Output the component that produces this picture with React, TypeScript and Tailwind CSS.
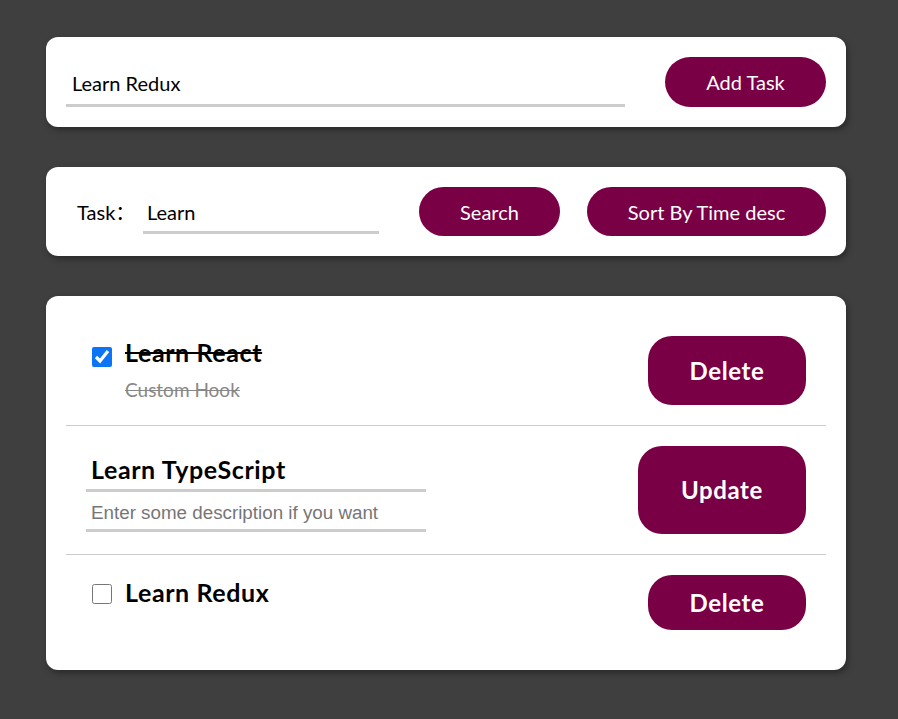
import React from 'react';

const ui = { fontFamily: 'Lato, "Noto Sans CJK SC", sans-serif' };

export default function App() {
  return (
    <div className="min-h-[719px] w-full bg-[#3f3f3f] pt-[37px]" style={ui}>
      <div className="ml-[46px] w-[800px] flex flex-col gap-10">
        {/* add task */}
        <div className="flex items-center justify-between rounded-xl bg-white px-5 py-5 shadow-[2px_3px_6px_rgba(0,0,0,0.35)]">
          <input
            defaultValue="Learn Redux"
            className="w-[559px] h-[49px] border-b-[3px] border-[#cccccc] px-1.5 pt-1 text-[20px] text-black outline-none"
          />
          <button className="h-[50px] w-[161px] rounded-full bg-[#7a0046] text-[20px] text-white">Add Task</button>
        </div>

        {/* search */}
        <div className="flex items-center rounded-xl bg-white px-5 py-5 shadow-[2px_3px_6px_rgba(0,0,0,0.35)]">
          <span className="ml-[11px] w-[66px] text-[20px] text-black">Task：</span>
          <input
            defaultValue="Learn"
            className="w-[236px] h-[45px] border-b-[3px] border-[#cccccc] px-1 pt-1 text-[20px] text-black outline-none"
          />
          <button className="ml-10 h-[49px] w-[141px] rounded-full bg-[#7a0046] text-[20px] text-white">Search</button>
          <button className="ml-[27px] h-[49px] w-[239px] rounded-full bg-[#7a0046] text-[20px] text-white">Sort By Time desc</button>
        </div>

        {/* list */}
        <div className="flex flex-col rounded-xl bg-white p-5 shadow-[2px_3px_6px_rgba(0,0,0,0.35)]">
          <div className="flex items-start justify-between p-5">
            <div className="flex items-start">
              <input type="checkbox" defaultChecked className="ml-1.5 mt-[11px] h-5 w-5 accent-[#0b75f5]" />
              <div className="ml-[13px] flex flex-col">
                <span className="text-[25px] font-bold leading-8 tracking-[0.6px] text-black line-through">Learn React</span>
                <span className="mt-[10px] text-[19px] leading-6 text-[#888888] line-through">Custom Hook</span>
              </div>
            </div>
            <button className="h-[69px] w-[158px] rounded-[24px] bg-[#7a0046] text-[24px] font-bold tracking-[0.6px] text-white">Delete</button>
          </div>
          <div className="h-px bg-[#cccccc]" />
          <div className="flex items-start justify-between p-5">
            <div className="flex w-[340px] flex-col">
              <input
                defaultValue="Learn TypeScript"
                className="h-[46px] border-b-[3px] border-[#cccccc] px-[5px] pt-0.5 text-[25px] font-bold tracking-[0.6px] text-black outline-none"
              />
              <input
                placeholder="Enter some description if you want"
                className="h-[40px] border-b-[3px] border-[#cccccc] px-[5px] pt-1 text-[18.8px] text-black outline-none placeholder:text-[#767676]"
                style={{ fontFamily: '"Liberation Sans", Arial, sans-serif' }}
              />
            </div>
            <button className="h-[88px] w-[168px] rounded-[24px] bg-[#7a0046] text-[24px] font-bold tracking-[0.6px] text-white">Update</button>
          </div>
          <div className="h-px bg-[#cccccc]" />
          <div className="flex items-start justify-between p-5">
            <div className="flex items-start">
              <input type="checkbox" className="ml-1.5 mt-[9px] h-5 w-5" />
              <span className="ml-[13px] pt-[1px] text-[25px] font-bold leading-8 tracking-[0.6px] text-black">Learn Redux</span>
            </div>
            <button className="h-[55px] w-[158px] rounded-[24px] bg-[#7a0046] text-[24px] font-bold tracking-[0.6px] text-white">Delete</button>
          </div>
        </div>
      </div>
    </div>
  );
}
